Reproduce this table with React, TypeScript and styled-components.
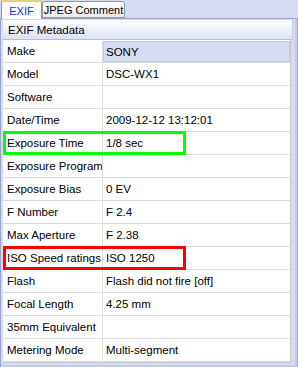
import React from "react";
import styled, { createGlobalStyle } from "styled-components";

const Global = createGlobalStyle`
  html, body { margin: 0; padding: 0; background: #d4dbf1; }
  body { font-family: "Liberation Sans", Arial, sans-serif; font-size: 11.5px; color: #000; }
`;

const Window = styled.div`
  width: 298px;
  height: 367px;
  background: #d4dbf1;
  display: flex;
  flex-direction: column;
  overflow: hidden;
`;

const TabStrip = styled.div`
  height: 19px;
  display: flex;
  align-items: flex-end;
  padding-left: 1px;
  position: relative;
  z-index: 2;
`;

const Tab = styled.div<{ $active?: boolean }>`
  box-sizing: border-box;
  height: ${(p) => (p.$active ? "19px" : "17px")};
  margin-bottom: ${(p) => (p.$active ? "-1px" : "0")};
  width: ${(p) => (p.$active ? "41px" : "83px")};
  justify-content: center;
  display: flex;
  align-items: center;
  white-space: nowrap;
  border: 1px solid #919b9c;
  border-bottom: ${(p) => (p.$active ? "none" : "1px solid #919b9c")};
  border-top: ${(p) => (p.$active ? "2px solid #e2d27a" : "1px solid #919b9c")};
  border-radius: 3px 3px 0 0;
  background: ${(p) => (p.$active ? "#fcfcfe" : "linear-gradient(#ffffff, #ecebe6)")};
  color: ${(p) => (p.$active ? "#1530e0" : "#000")};
  font-size: 11px;
`;

const Panel = styled.div`
  flex: 1;
  box-sizing: border-box;
  border: 1px solid #9aa3cc;
  box-shadow: inset -2px -2px 0 #c4cbe8;
  padding: 1px 4px 4px 1px;
  display: flex;
  flex-direction: column;
`;

const Header = styled.div`
  height: 20px;
  box-sizing: border-box;
  margin-left: 1px;
  padding-left: 5px;
  display: flex;
  align-items: center;
  background: linear-gradient(#ffffff 0%, #f1f3fb 40%, #dde2f4 100%);
  border-bottom: 1px solid #b4bbdb;
  border-right: 1px solid #c8cee8;
  font-size: 11.5px;
`;

const Table = styled.div`
  flex: 1;
  margin-left: 1px;
  margin-right: 2px;
  background: #ffffff;
  border-right: 1px solid #c9c9c9;
  border-bottom: 1px solid #c9c9c9;
  display: flex;
  flex-direction: column;
`;

const Row = styled.div`
  position: relative;
  height: 23px;
  box-sizing: border-box;
  display: grid;
  grid-template-columns: 100px 1fr;
  border-bottom: 1px solid #dcdcdc;
`;

const Cell = styled.div<{ $selected?: boolean; $label?: boolean }>`
  display: flex;
  align-items: center;
  padding-left: ${(p) => (p.$label ? "4px" : "3px")};
  border-right: ${(p) => (p.$label ? "1px solid #dcdcdc" : "none")};
  background: ${(p) => (p.$selected ? "#d6dcf3" : "transparent")};
  box-shadow: ${(p) => (p.$selected ? "inset 0 0 0 1px #c2c9e8" : "none")};
  margin: ${(p) => (p.$selected ? "1px 0 0 0" : "0")};
  white-space: nowrap;
  overflow: hidden;
  font-size: 11.5px;
`;

const Highlight = styled.div<{ $color: string }>`
  position: absolute;
  left: 0;
  top: -1px;
  width: 183px;
  height: 24px;
  box-sizing: border-box;
  border: 3px solid ${(p) => p.$color};
  pointer-events: none;
`;

const rows: { label: string; value: string; box?: string; selected?: boolean }[] = [
  { label: "Make", value: "SONY", selected: true },
  { label: "Model", value: "DSC-WX1" },
  { label: "Software", value: "" },
  { label: "Date/Time", value: "2009-12-12 13:12:01" },
  { label: "Exposure Time", value: "1/8 sec", box: "#00ff00" },
  { label: "Exposure Program", value: "" },
  { label: "Exposure Bias", value: "0 EV" },
  { label: "F Number", value: "F 2.4" },
  { label: "Max Aperture", value: "F 2.38" },
  { label: "ISO Speed ratings", value: "ISO 1250", box: "#ff0000" },
  { label: "Flash", value: "Flash did not fire [off]" },
  { label: "Focal Length", value: "4.25 mm" },
  { label: "35mm Equivalent", value: "" },
  { label: "Metering Mode", value: "Multi-segment" },
];

export default function App() {
  return (
    <Window>
      <Global />
      <TabStrip>
        <Tab $active>EXIF</Tab>
        <Tab>JPEG Comment</Tab>
      </TabStrip>
      <Panel>
        <Header>EXIF Metadata</Header>
        <Table>
          {rows.map((r) => (
            <Row key={r.label}>
              <Cell $label>{r.label}</Cell>
              <Cell $selected={r.selected}>{r.value}</Cell>
              {r.box && <Highlight $color={r.box} />}
            </Row>
          ))}
        </Table>
      </Panel>
    </Window>
  );
}
